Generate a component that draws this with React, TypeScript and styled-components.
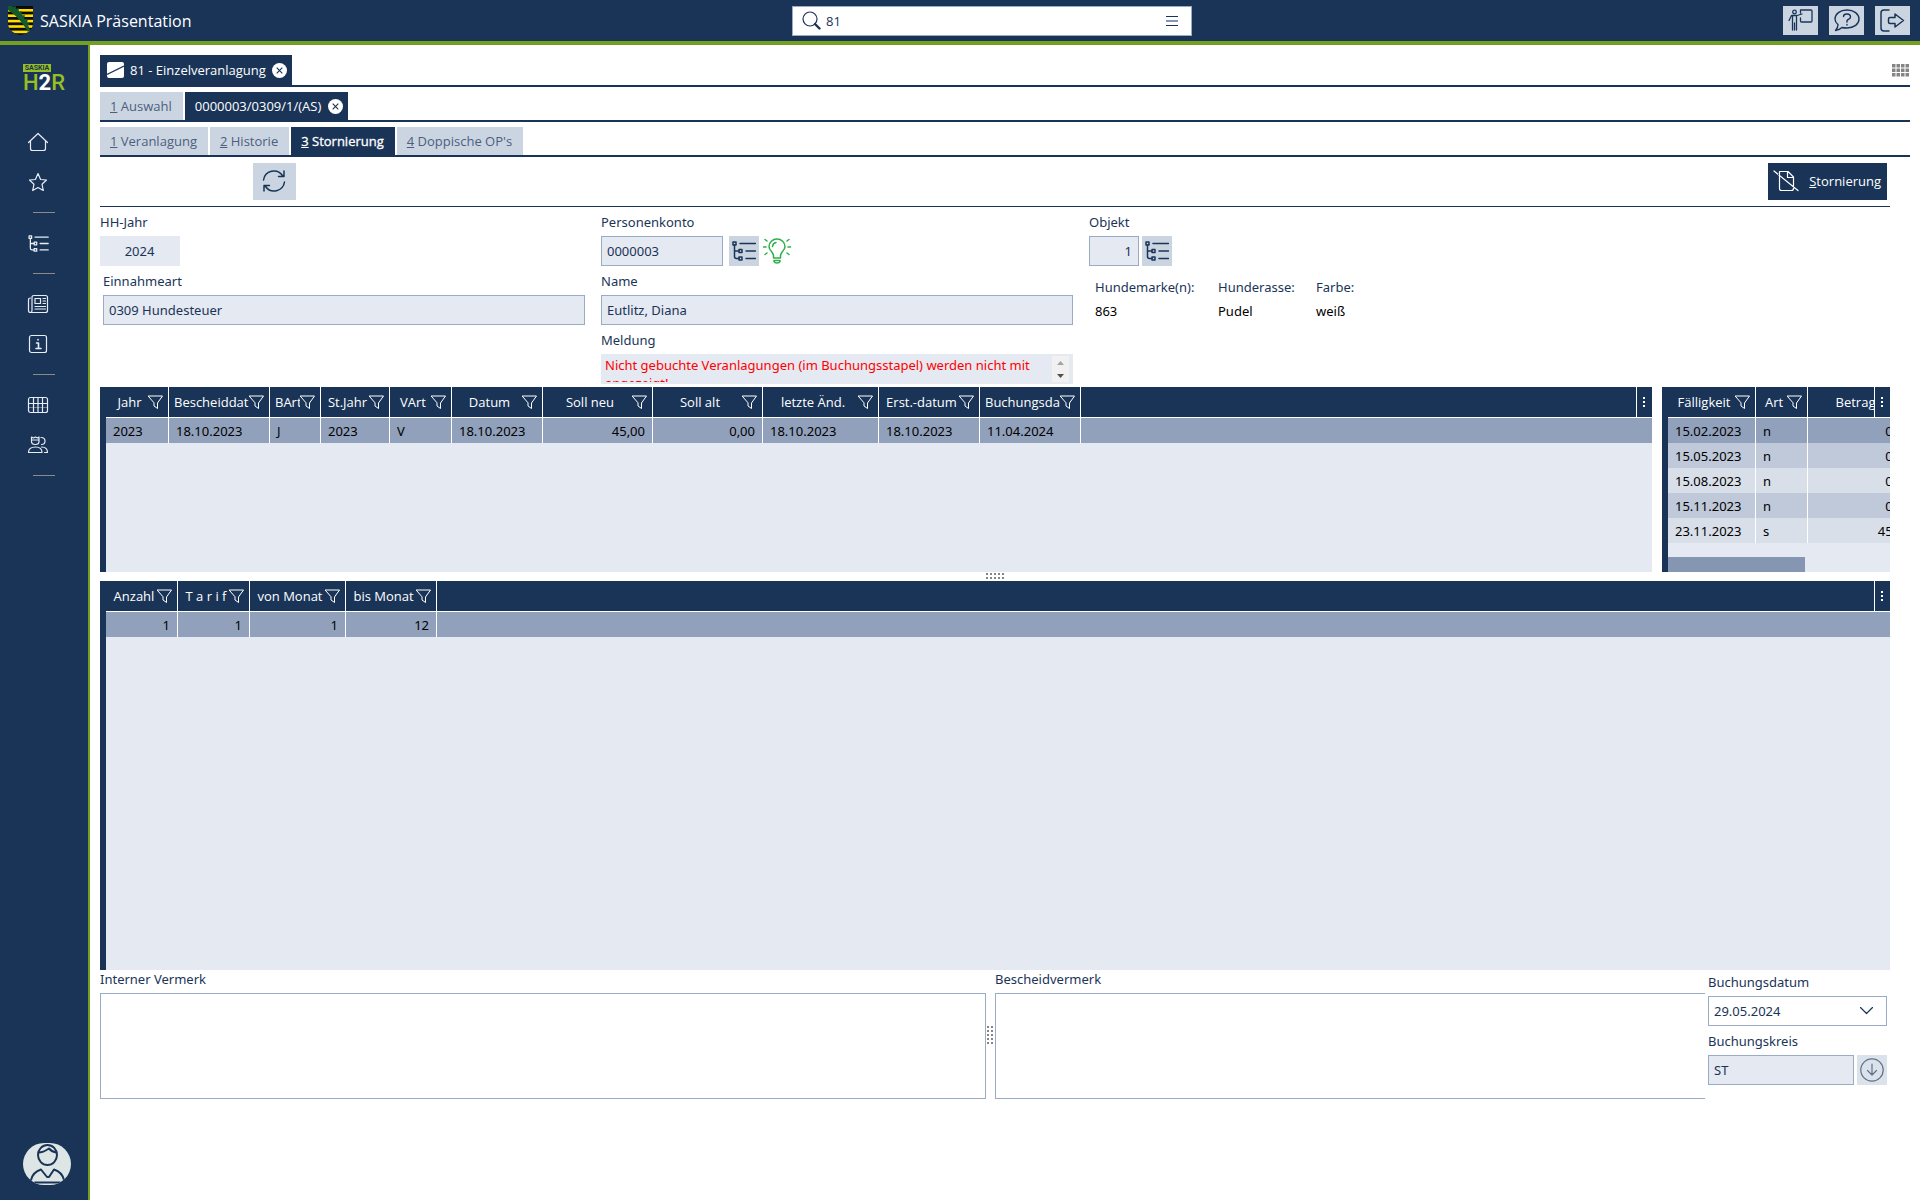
import React from "react";
import styled, { createGlobalStyle, css } from "styled-components";

const c = {
  navy: "#1a3458",
  green: "#739f22",
  field: "#e5e9f1",
  button: "#cbd5e1",
  line: "#9aabc4",
  selected: "#91a1bb",
  odd: "#bfc9d9",
  even: "#d9dfe8",
  thumb: "#8496b2",
};

const formFont = `"Noto Sans", "Open Sans", sans-serif`;

const Global = createGlobalStyle`
  *, *::before, *::after { box-sizing: border-box; }
  body { margin: 0; background: #fff; }
  body, button, input, select, textarea {
    font-family: "Open Sans", "Noto Sans", sans-serif;
    font-size: 13px;
    line-height: 18px;
    color: ${c.navy};
  }
  button { border: 0; padding: 0; background: none; cursor: pointer; }
  svg { display: block; flex: none; }
`;

const Shell = styled.div`
  display: flex;
  flex-direction: column;
  height: 100vh;
`;

const TopBar = styled.header`
  display: grid;
  grid-template-columns: 784fr 400px 718fr;
  align-items: center;
  height: 45px;
  flex: none;
  padding: 0 10px 0 8px;
  background: ${c.navy};
  border-bottom: 4px solid ${c.green};
`;

const Brand = styled.div`
  display: flex;
  align-items: center;
  gap: 7px;
  color: #fff;
  font-size: 16px;
`;

const Search = styled.label`
  display: flex;
  align-items: center;
  height: 30px;
  padding: 0 13px 0 9px;
  gap: 5px;
  background: #fff;
  border: 1px solid ${c.line};
  input {
    flex: 1;
    min-width: 0;
    border: 0;
    padding: 0;
    outline: 0;
    background: none;
  }
`;

const TopActions = styled.div`
  display: flex;
  justify-content: flex-end;
  gap: 11px;
`;

const TopButton = styled.button`
  display: grid;
  place-items: center;
  width: 35px;
  height: 29px;
  background: ${c.button};
`;

const Body = styled.div`
  display: flex;
  flex: 1;
  min-height: 0;
`;

const Side = styled.aside`
  display: flex;
  flex-direction: column;
  width: 90px;
  flex: none;
  padding: 19px 0 15px;
  background: ${c.navy};
  border-right: 2px solid ${c.green};
`;

const Logo = styled.div`
  height: 58px;
  padding-left: 23px;
  color: #97be23;
`;

const LogoTag = styled.div`
  width: 28px;
  height: 8px;
  background: #97be23;
  color: ${c.navy};
  font: 700 7px/8px Roboto, sans-serif;
  text-align: center;
`;

const LogoName = styled.div`
  font: 500 22px/21px Roboto, sans-serif;
  span { color: #fff; font-weight: 700; }
`;

const SideNav = styled.nav`
  display: flex;
  flex-direction: column;
  a {
    display: flex;
    align-items: center;
    height: 40px;
    padding-left: 27px;
    color: #e8edf3;
  }
  hr {
    width: 22px;
    height: 1px;
    margin: 10px 0 10px 33px;
    border: 0;
    background: #8a8a86;
  }
`;

const Avatar = styled.button`
  width: 48px;
  height: 42px;
  margin: auto 0 0 23px;
  border-radius: 22px;
  background: #dde6e5;
  overflow: hidden;
`;

const Main = styled.main`
  flex: 1;
  min-width: 0;
  display: flex;
  flex-direction: column;
  padding: 10px 10px 101px;
`;

const Tabs = styled.div<{ $tall?: boolean }>`
  display: flex;
  flex: none;
  gap: 2px;
  height: ${(p) => (p.$tall ? 32 : 30)}px;
  margin-bottom: 5px;
  border-bottom: 2px solid ${c.navy};
`;

const Tab = styled.div<{ $active?: boolean; $strong?: boolean }>`
  display: flex;
  align-items: center;
  gap: 7px;
  padding: 0 ${(p) => (p.$active && !p.$strong ? 5 : 11)}px 0 10px;
  background: ${(p) => (p.$active ? c.navy : c.button)};
  button {
    color: ${(p) => (p.$active ? "#fff" : "#4a5f80")};
    white-space: nowrap;
    ${(p) => p.$strong && css`-webkit-text-stroke: 0.3px #fff;`}
  }
`;

const ScreenTab = styled(Tab)`
  gap: 6px;
  padding-left: 7px;
`;

const GridToggle = styled.button`
  margin: 9px 1px auto auto;
`;

const Work = styled.div`
  display: flex;
  flex-direction: column;
  flex: 1;
  min-height: 0;
  padding-right: 20px;
`;

const Toolbar = styled.div`
  display: flex;
  justify-content: space-between;
  flex: none;
  height: 45px;
  padding: 1px 3px 0 153px;
  border-bottom: 1px solid ${c.navy};
`;

const RefreshButton = styled.button`
  display: grid;
  place-items: center;
  width: 43px;
  height: 37px;
  padding: 0 2px 2px 0;
  background: ${c.button};
`;

const PrimaryButton = styled.button`
  display: flex;
  align-items: center;
  gap: 10px;
  height: 37px;
  padding: 0 6px 2px 5px;
  background: ${c.navy};
  color: #fff;
`;

const Form = styled.div`
  display: grid;
  grid-template-columns: 501fr 488fr 801fr;
  flex: none;
  height: 180px;
  padding-top: 6px;
`;

const FormColumn = styled.div<{ $end?: number }>`
  display: flex;
  flex-direction: column;
  padding-right: ${(p) => p.$end ?? 0}px;
`;

const Field = styled.div<{ $inset?: boolean }>`
  display: flex;
  flex-direction: column;
  height: 59px;
  flex: none;
  padding-left: ${(p) => (p.$inset ? 3 : 0)}px;
  label, input, textarea, select { font-family: ${formFont}; }
  label { height: 23px; line-height: 18px; }
`;

const FieldRow = styled.div<{ $gap?: number }>`
  display: flex;
  align-items: center;
  gap: ${(p) => p.$gap ?? 3}px;
`;

const TextInput = styled.input<{ $width?: number; $plain?: boolean; $align?: string }>`
  width: ${(p) => (p.$width ? `${p.$width}px` : "100%")};
  height: 30px;
  padding: 0 6px 0 5px;
  border: 1px solid ${(p) => (p.$plain ? c.field : c.line)};
  border-radius: 0;
  background: ${c.field};
  text-align: ${(p) => p.$align ?? "left"};
  outline: 0;
`;

const IconButton = styled.button<{ $soft?: boolean }>`
  display: grid;
  place-items: center;
  flex: none;
  width: 30px;
  height: 30px;
  background: ${(p) => (p.$soft ? "#dbe2ea" : c.button)};
`;

const Message = styled.div`
  display: flex;
  height: 30px;
  padding: 2px 4px 2px 0;
  background: ${c.field};
  textarea {
    flex: 1;
    height: 26px;
    padding: 0 4px;
    border: 0;
    outline: 0;
    resize: none;
    overflow: hidden;
    background: none;
    color: #f00;
  }
`;

const Stepper = styled.div`
  display: flex;
  flex-direction: column;
  width: 17px;
  background: #f1f1f1;
  button { display: grid; place-items: center; flex: 1; }
`;

const Facts = styled.dl`
  display: grid;
  grid-template-columns: 123px 98px auto;
  justify-content: start;
  grid-auto-flow: column;
  grid-template-rows: 24px 24px;
  margin: 4px 0 0 6px;
  font-family: ${formFont};
  line-height: 22px;
  dt, dd { margin: 0; }
  dd { color: #000; }
`;

const TopGrids = styled.div`
  display: grid;
  grid-template-columns: minmax(0, 1fr) 228px;
  gap: 10px;
  flex: none;
  height: 185px;
`;

const GridPane = styled.section`
  position: relative;
  flex: 1;
  min-height: 0;
  border-left: 6px solid ${c.navy};
  background: ${c.field};
  overflow: hidden;
`;

const ColumnMenu = styled.button`
  position: absolute;
  top: 0;
  right: 0;
  display: grid;
  place-items: center;
  width: 16px;
  height: 30px;
  padding-right: 1px;
  border-left: 1px solid #fff;
  background: ${c.navy};
`;

const Scroll = styled.div`
  position: absolute;
  left: 0;
  bottom: 0;
  width: 137px;
  height: 15px;
  background: ${c.thumb};
`;

const Table = styled.table`
  width: 100%;
  table-layout: fixed;
  border-collapse: separate;
  border-spacing: 0;
  th {
    height: 31px;
    padding: 0;
    background: ${c.navy};
    border-bottom: 1px solid #fff;
    color: #fff;
    font-weight: 400;
  }
  td {
    height: 25px;
    padding: 0 7px;
    color: #000;
    font-family: ${formFont};
    white-space: nowrap;
  }
  th:not(:last-child), td:not(:last-child) { border-right: 1px solid #fff; }
`;

const rowTone = { selected: c.selected, odd: c.odd, even: c.even };
const Row = styled.tr<{ $tone: keyof typeof rowTone }>`
  td { background: ${(p) => rowTone[p.$tone]}; }
`;

const Cell = styled.td<{ $right?: boolean }>`
  ${(p) => p.$right && css`text-align: right;`}
`;

const HeadCell = styled.div`
  display: flex;
  align-items: center;
  padding: 0 5px;
  span {
    flex: 1;
    min-width: 0;
    overflow: hidden;
    white-space: nowrap;
    text-align: center;
  }
`;

const SplitRow = styled.div`
  display: grid;
  place-items: center;
  flex: none;
  height: 9px;
  padding-bottom: 1px;
`;

const Notes = styled.div`
  display: grid;
  grid-template-columns: 886fr 9px 710fr 185px;
  flex: none;
  height: 129px;
`;

const Note = styled.div<{ $open?: boolean }>`
  display: flex;
  flex-direction: column;
  label, textarea { font-family: ${formFont}; }
  label { height: 23px; line-height: 18px; }
  textarea {
    flex: 1;
    width: 100%;
    padding: 5px;
    border: 1px solid ${c.line};
    ${(p) => p.$open && css`border-right: 0;`}
    border-radius: 0;
    outline: 0;
    resize: none;
  }
`;

const SplitColumn = styled.div`
  display: grid;
  justify-items: center;
  align-items: center;
  padding-right: 2px;
`;

const Booking = styled.div`
  padding: 3px 3px 0;
`;

const SelectBox = styled.div`
  position: relative;
  select {
    width: 100%;
    height: 30px;
    padding: 0 5px;
    border: 1px solid ${c.line};
    border-radius: 0;
    background: #fff;
    appearance: none;
  }
  svg {
    position: absolute;
    right: 14px;
    top: 11px;
    pointer-events: none;
  }
`;

const Svg = ({ w, h, vb, sw = 1.2, color = "currentColor", children }: {
  w: number; h: number; vb?: string; sw?: number; color?: string; children: React.ReactNode;
}) => (
  <svg width={w} height={h} viewBox={vb ?? `0 0 ${w} ${h}`} fill="none" stroke={color} strokeWidth={sw}
    strokeLinecap="round" strokeLinejoin="round" aria-hidden="true">{children}</svg>
);

const Crest = () => (
  <svg width="25" height="29" viewBox="0 0 25 29" aria-hidden="true">
    <defs><clipPath id="shield"><path d="M0 0H25V17C25 24 19 28 12.500 29C6 28 0 24 0 17Z" /></clipPath></defs>
    <g clipPath="url(#shield)">
      <rect width="25" height="29" fill="#0b0b08" />
      {[3, 8.400, 13.800, 19.200, 24.600].map((y) => <rect key={y} y={y} width="25" height="2.600" fill="#ffdd00" />)}
      <path d="M0 0H4C12 5 18 13 22 24L20 26C15 17 8 9 0 4Z" fill="#145a2c" />
      <path d="M4 2l3-1 0 3 3-1 0 4 3-1 0 4 3 0-1 4 4 0-1 4 3 0" fill="none" stroke="#145a2c" strokeWidth="1.500" />
    </g>
  </svg>
);

const TreeIcon = ({ w = 24 }: { w?: number }) => (
  <Svg w={w} h={w === 24 ? 20 : 17} vb={w === 24 ? "0 0 24 20" : "-1 0 25 20"} sw={1.5}>
    <rect x="1" y="1" width="3" height="3" /><rect x="7" y="8.500" width="3" height="3" /><rect x="7" y="16" width="3" height="3" />
    <path d="M2.500 4V15.500Q2.500 17.500 4.500 17.500H7M2.500 10H7M8 2.500H23.500M14 10H23.500M14 17.500H23.500" />
  </Svg>
);

const CloseIcon = () => (
  <svg width="15" height="15" viewBox="0 0 15 15" aria-hidden="true">
    <circle cx="7.500" cy="7.500" r="7.500" fill="#fff" />
    <path d="M4.700 4.700L10.300 10.300M10.300 4.700L4.700 10.300" stroke={c.navy} strokeWidth="1.100" />
  </svg>
);

const FilterIcon = () => (
  <Svg w={15} h={14} color="#fff" sw={1}>
    <path d="M0.500 1H14.500L9.500 8V13.500L6 11V8.200Z" />
  </Svg>
);

const Dots = ({ cols, rows, step = 4, size = 2, color = "#858585" }: {
  cols: number; rows: number; step?: number; size?: number; color?: string;
}) => (
  <svg width={Math.ceil((cols - 1) * step + size)} height={Math.ceil((rows - 1) * step + size)} aria-hidden="true">
    {Array.from({ length: cols * rows }, (_, i) => (
      <rect key={i} x={(i % cols) * step} y={Math.floor(i / cols) * step} width={size} height={size} fill={color} />
    ))}
  </svg>
);

type Col = { title: string; width?: number; right?: boolean };

const bookingCols: Col[] = [
  { title: "Jahr", width: 63 }, { title: "Bescheiddatum", width: 101 }, { title: "BArt", width: 51 },
  { title: "St.Jahr", width: 69 }, { title: "VArt", width: 62 }, { title: "Datum", width: 91 },
  { title: "Soll neu", width: 110, right: true }, { title: "Soll alt", width: 110, right: true },
  { title: "letzte Änd.", width: 116 }, { title: "Erst.-datum", width: 101 }, { title: "Buchungsdatum", width: 101 },
];
const bookingRows = [["2023", "18.10.2023", "J", "2023", "V", "18.10.2023", "45,00", "0,00", "18.10.2023", "18.10.2023", "11.04.2024"]];

const dueCols: Col[] = [
  { title: "Fälligkeit", width: 88 }, { title: "Art", width: 52 }, { title: "Betrag", width: 110, right: true },
];
const dueRows = [
  ["15.02.2023", "n", "0,00"], ["15.05.2023", "n", "0,00"], ["15.08.2023", "n", "0,00"],
  ["15.11.2023", "n", "0,00"], ["23.11.2023", "s", "45,00"],
];

const tariffCols: Col[] = [
  { title: "Anzahl", width: 72, right: true }, { title: "T a r i f", width: 72, right: true },
  { title: "von Monat", width: 96, right: true }, { title: "bis Monat", width: 91, right: true },
];
const tariffRows = [["1", "1", "1", "12"]];

function DataGrid({ cols, rows, scroll }: { cols: Col[]; rows: string[][]; scroll?: boolean }) {
  return (
    <GridPane>
      <Table style={scroll ? { width: cols.reduce((n, k) => n + (k.width ?? 0), 0) } : undefined}>
        <colgroup>
          {cols.map((k) => <col key={k.title} style={{ width: k.width }} />)}
          {!scroll && <col />}
        </colgroup>
        <thead>
          <tr>
            {cols.map((k) => (
              <th key={k.title} scope="col">
                <HeadCell><span>{k.title}</span><button aria-label={`${k.title} filtern`}><FilterIcon /></button></HeadCell>
              </th>
            ))}
            {!scroll && <th />}
          </tr>
        </thead>
        <tbody>
          {rows.map((r, i) => (
            <Row key={i} $tone={i === 0 ? "selected" : i % 2 ? "odd" : "even"}>
              {r.map((v, j) => <Cell key={j} $right={cols[j].right}>{v}</Cell>)}
              {!scroll && <Cell />}
            </Row>
          ))}
        </tbody>
      </Table>
      <ColumnMenu aria-label="Spaltenmenü"><Dots cols={1} rows={3} color="#fff" /></ColumnMenu>
      {scroll && <Scroll />}
    </GridPane>
  );
}

const NavIcon = ({ name }: { name: string }) => {
  switch (name) {
    case "home":
      return <Svg w={22} h={20}><path d="M1.500 10.500L11 1.500L20.500 10.500M3.500 9V16.500Q3.500 18.500 5.500 18.500H16.500Q18.500 18.500 18.500 16.500V9" /></Svg>;
    case "star":
      return <Svg w={22} h={20}><path d="M11 1.500L13.600 7.500L19.500 8L15 12.200L16.300 18.500L11 15.500L5.700 18.500L7 12.200L2.500 8L8.400 7.500Z" /></Svg>;
    case "tree":
      return <TreeIcon w={22} />;
    case "news":
      return <Svg w={22} h={20}><path d="M5 3.500Q5 1.500 7 1.500H18.500Q20.500 1.500 20.500 3.500V16.500Q20.500 18.500 18.500 18.500H3.500Q1.500 18.500 1.500 16.500V6Q1.500 4 3.500 4M5 4V16.500Q5 18.500 3.500 18.500M8 4.500H13.500V9.500H8ZM16 4.500H18.500M16 7H18.500M16 9.500H18.500M8 12.500H18.500M8 15H18.500" /></Svg>;
    case "info":
      return <Svg w={22} h={20}><rect x="2.500" y="1.500" width="17" height="17" rx="2" /><path d="M11 5.500V6M9.500 9H11.500V14M9 14.500H14" strokeWidth="1.600" /></Svg>;
    case "grid":
      return <Svg w={22} h={20}><rect x="1.500" y="2.500" width="19" height="15" rx="2" /><path d="M1.500 8.500H20.500" /><path d="M1.500 12.500H20.500" strokeOpacity="0.4" /><path d="M6.500 2.500V17.500M11 2.500V17.500M15.500 2.500V17.500" /></Svg>;
    default:
      return <Svg w={22} h={20}><path d="M4.500 2L6.500 3L8.500 2L10.500 3L12 2V6.500Q12 9.500 8.300 9.500Q4.500 9.500 4.500 6.500ZM4.500 5H12M14 2.500Q18 2.500 18 6Q18 9.500 14.500 9.500M1.500 17.500Q1.500 12 8.500 12Q15 12 15 17.500ZM14.500 12Q20.500 12 20.500 17.500H17.500" /></Svg>;
  }
};

const navGroups = [
  [["home", "Startseite"], ["star", "Favoriten"]],
  [["tree", "Navigation"]],
  [["news", "Neuigkeiten"], ["info", "Info"]],
  [["grid", "Kalender"], ["users", "Benutzer"]],
];

export default function App() {
  return (
    <Shell>
      <Global />
      <TopBar>
        <Brand><Crest />SASKIA Präsentation</Brand>
        <Search>
          <Svg w={19} h={19} color={c.navy}><circle cx="8" cy="8" r="7" /><path d="M13 13L17.500 17.500" strokeWidth="2.400" /></Svg>
          <input aria-label="Suche" defaultValue="81" />
          <svg width="12" height="10" aria-hidden="true">
            <path d="M0 0.500H12M0 9.500H12" stroke={c.navy} /><path d="M0 5H12" stroke={c.thumb} strokeWidth="2" />
          </svg>
        </Search>
        <TopActions>
          <TopButton aria-label="Präsentation">
            <Svg w={25} h={23} color={c.navy} sw={1.3}><circle cx="6.500" cy="3" r="1.800" /><path d="M12.500 1H23Q24 1 24 2V12Q24 13 23 13H13.500Q12.500 13 12.500 12V9M12.500 4V1M1 11.500L3.500 6.500H9L14 5M4.500 7V21M6.500 14V21M8.500 7V21" /></Svg>
          </TopButton>
          <TopButton aria-label="Hilfe">
            <Svg w={26} h={23} color={c.navy} sw={1.4}><path d="M4 15.500Q1 13 1 10C1 5 6 1 13 1S25 5 25 10S20 19 13 19Q10 19 8 18.500Q5.500 21 1.500 21.500Q4 19 4 15.500Z" /><path d="M9.500 7.500Q9.500 5 13 5T16.500 7.800Q16.500 9.500 14.500 10.300T13 13M13 15.500V16" /></Svg>
          </TopButton>
          <TopButton aria-label="Abmelden">
            <Svg w={25} h={23} color={c.navy} sw={1.5}><path d="M9 1H4Q1 1 1 4V19Q1 22 4 22H9M10 8.500H15V5L23.500 11.500L15 18V14.500H10Q8.500 14.500 8.500 13V10Q8.500 8.500 10 8.500Z" /></Svg>
          </TopButton>
        </TopActions>
      </TopBar>
      <Body>
        <Side>
          <Logo><LogoTag>SASKIA</LogoTag><LogoName>H<span>2</span>R</LogoName></Logo>
          <SideNav>
            {navGroups.map((g, i) => (
              <React.Fragment key={i}>
                {g.map(([icon, label]) => <a key={icon} href={`#${icon}`} aria-label={label}><NavIcon name={icon} /></a>)}
                <hr />
              </React.Fragment>
            ))}
          </SideNav>
          <Avatar aria-label="Profil">
            <Svg w={48} h={42} color={c.navy} sw={2}>
              <ellipse cx="24.500" cy="12" rx="9.500" ry="10" />
              <path d="M15.500 9.500Q20 9.500 26 5.500Q29 9 33.500 9.500" />
              <path d="M8 37Q10 29 18 26.500L24 34H26L31 26.500Q39 29 41 37M12 39.500H37" />
            </Svg>
          </Avatar>
        </Side>
        <Main>
          <Tabs $tall role="tablist">
            <ScreenTab $active>
              <svg width="17" height="16" aria-hidden="true"><rect width="17" height="16" rx="2" fill="#fff" /><path d="M0 12.500L17 4" stroke={c.navy} strokeWidth="1.300" /></svg>
              <button role="tab">81 - Einzelveranlagung</button>
              <button aria-label="Schließen"><CloseIcon /></button>
            </ScreenTab>
            <GridToggle aria-label="Ansicht"><Dots cols={4} rows={3} size={3.5} step={4.5} color="#858585" /></GridToggle>
          </Tabs>
          <Tabs role="tablist">
            <Tab><button role="tab"><u>1</u> Auswahl</button></Tab>
            <Tab $active>
              <button role="tab">0000003/0309/1/(AS)</button>
              <button aria-label="Schließen"><CloseIcon /></button>
            </Tab>
          </Tabs>
          <Tabs role="tablist">
            <Tab><button role="tab"><u>1</u> Veranlagung</button></Tab>
            <Tab><button role="tab"><u>2</u> Historie</button></Tab>
            <Tab $active $strong><button role="tab"><u>3</u> Stornierung</button></Tab>
            <Tab><button role="tab"><u>4</u> Doppische OP's</button></Tab>
          </Tabs>
          <Work>
            <Toolbar>
              <RefreshButton aria-label="Aktualisieren">
                <Svg w={24} h={24} color={c.navy} sw={1.5}><path d="M1.500 11A10.500 10.500 0 0 1 20.500 6.500M22 2V7.500H16.500M22.500 13A10.500 10.500 0 0 1 3.500 17.500M2 22V16.500H7.500" /></Svg>
              </RefreshButton>
              <PrimaryButton>
                <Svg w={26} h={22} color="#fff"><path d="M6.500 1.500H15L20.500 7V18.500Q20.500 20.500 18.500 20.500H8.500Q6.500 20.500 6.500 18.500ZM14.500 1.500V7.500H20.500M1 1L25 20.500" /></Svg>
                <span><u>S</u>tornierung</span>
              </PrimaryButton>
            </Toolbar>
            <Form>
              <FormColumn $end={16}>
                <Field><label htmlFor="jahr">HH-Jahr</label><TextInput id="jahr" readOnly value="2024" $width={80} $plain $align="center" /></Field>
                <Field $inset><label htmlFor="art">Einnahmeart</label><TextInput id="art" readOnly value="0309 Hundesteuer" /></Field>
              </FormColumn>
              <FormColumn $end={16}>
                <Field>
                  <label htmlFor="konto">Personenkonto</label>
                  <FieldRow>
                    <TextInput id="konto" readOnly value="0000003" $width={122} />
                    <span />
                    <IconButton aria-label="Personenkonto wählen"><TreeIcon /></IconButton>
                    <Svg w={30} h={26} color="#2fae4c" sw={1.5}>
                      <path d="M11.500 18Q11.500 16 9.500 13.500Q7 11 7 8.500A8 7.500 0 0 1 23 8.500Q23 11 20.500 13.500Q18.500 16 18.500 18V20H11.500ZM12 22.500V23.500Q12.500 25 15 25T18 23.500V22.500ZM10.500 8.500Q11 5 14 4.500M1.500 9H4M26 9H28.500M3 1.500L5 3M27 1.500L25 3M3 16.500L5 15M27 16.500L25 15" />
                    </Svg>
                  </FieldRow>
                </Field>
                <Field><label htmlFor="name">Name</label><TextInput id="name" readOnly value="Eutlitz, Diana" /></Field>
                <Field>
                  <label htmlFor="meldung">Meldung</label>
                  <Message>
                    <textarea id="meldung" readOnly value="Nicht gebuchte Veranlagungen (im Buchungsstapel) werden nicht mit angezeigt!" />
                    <Stepper>
                      <button aria-label="Nach oben"><svg width="7" height="4"><path d="M0 4L3.500 0L7 4Z" fill="#a3a3a3" /></svg></button>
                      <button aria-label="Nach unten"><svg width="7" height="4"><path d="M0 0L3.500 4L7 0Z" fill="#505050" /></svg></button>
                    </Stepper>
                  </Message>
                </Field>
              </FormColumn>
              <FormColumn>
                <Field>
                  <label htmlFor="objekt">Objekt</label>
                  <FieldRow>
                    <TextInput id="objekt" readOnly value="1" $width={50} $align="right" />
                    <IconButton aria-label="Objekt wählen"><TreeIcon /></IconButton>
                  </FieldRow>
                </Field>
                <Facts>
                  <dt>Hundemarke(n):</dt><dd>863</dd>
                  <dt>Hunderasse:</dt><dd>Pudel</dd>
                  <dt>Farbe:</dt><dd>weiß</dd>
                </Facts>
              </FormColumn>
            </Form>
            <TopGrids>
              <DataGrid cols={bookingCols} rows={bookingRows} />
              <DataGrid cols={dueCols} rows={dueRows} scroll />
            </TopGrids>
            <SplitRow><Dots cols={5} rows={2} /></SplitRow>
            <DataGrid cols={tariffCols} rows={tariffRows} />
            <Notes>
              <Note><label htmlFor="intern">Interner Vermerk</label><textarea id="intern" /></Note>
              <SplitColumn><Dots cols={2} rows={5} /></SplitColumn>
              <Note $open><label htmlFor="bescheid">Bescheidvermerk</label><textarea id="bescheid" /></Note>
              <Booking>
                <Field>
                  <label htmlFor="datum">Buchungsdatum</label>
                  <SelectBox>
                    <select id="datum"><option>29.05.2024</option></select>
                    <Svg w={13} h={8} color={c.navy}><path d="M0.500 0.500L6.500 6.500L12.500 0.500" /></Svg>
                  </SelectBox>
                </Field>
                <Field>
                  <label htmlFor="kreis">Buchungskreis</label>
                  <FieldRow>
                    <TextInput id="kreis" readOnly value="ST" />
                    <IconButton $soft aria-label="Buchungskreis wählen">
                      <Svg w={24} h={24} color="#5f7391"><circle cx="12" cy="12" r="11.200" /><path d="M12 6V17M7.500 12.500L12 17L16.500 12.500" /></Svg>
                    </IconButton>
                  </FieldRow>
                </Field>
              </Booking>
            </Notes>
          </Work>
        </Main>
      </Body>
    </Shell>
  );
}
